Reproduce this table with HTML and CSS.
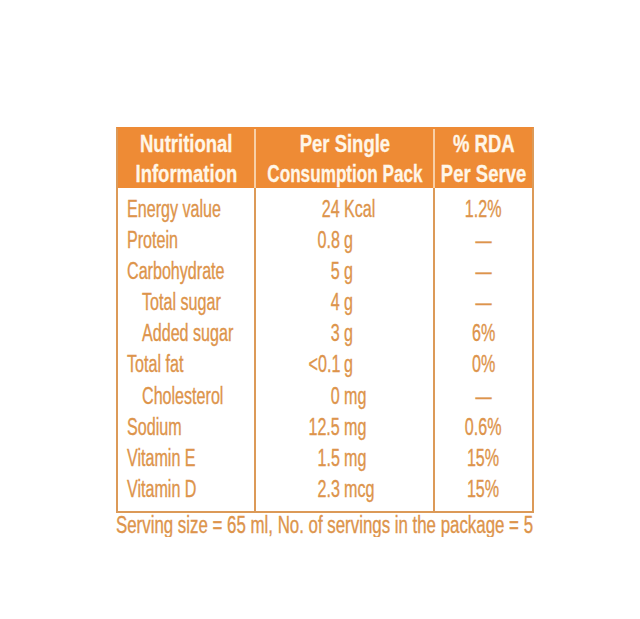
FILE: index.html
```html
<!DOCTYPE html>
<html lang="en">
<head>
<meta charset="utf-8">
<title>Nutritional Information</title>
<link rel="stylesheet" href="styles.css">
</head>
<body>
<div class="label">
  <div class="panel">
    <div class="head">
      <div class="hcell h1">
        <div class="hl"><span class="ht">Nutritional</span></div>
        <div class="hl"><span class="ht">Information</span></div>
      </div>
      <div class="hcell h2">
        <div class="hl"><span class="ht">Per Single</span></div>
        <div class="hl"><span class="ht tight">Consumption Pack</span></div>
      </div>
      <div class="hcell h3">
        <div class="hl"><span class="ht">% RDA</span></div>
        <div class="hl"><span class="ht">Per Serve</span></div>
      </div>
    </div>
    <div class="body">
      <div class="col names">
        <div class="row"><span class="t">Energy value</span></div>
        <div class="row"><span class="t">Protein</span></div>
        <div class="row"><span class="t">Carbohydrate</span></div>
        <div class="row sub"><span class="t">Total sugar</span></div>
        <div class="row sub"><span class="t">Added sugar</span></div>
        <div class="row"><span class="t">Total fat</span></div>
        <div class="row sub"><span class="t">Cholesterol</span></div>
        <div class="row"><span class="t">Sodium</span></div>
        <div class="row"><span class="t">Vitamin E</span></div>
        <div class="row"><span class="t">Vitamin D</span></div>
      </div>
      <div class="col values">
        <div class="row val"><span class="num"><span class="t">24</span></span><span class="unit"><span class="t">Kcal</span></span></div>
        <div class="row val"><span class="num"><span class="t">0.8</span></span><span class="unit"><span class="t">g</span></span></div>
        <div class="row val"><span class="num"><span class="t">5</span></span><span class="unit"><span class="t">g</span></span></div>
        <div class="row val"><span class="num"><span class="t">4</span></span><span class="unit"><span class="t">g</span></span></div>
        <div class="row val"><span class="num"><span class="t">3</span></span><span class="unit"><span class="t">g</span></span></div>
        <div class="row val"><span class="num"><span class="t">&lt;0.1</span></span><span class="unit"><span class="t">g</span></span></div>
        <div class="row val"><span class="num"><span class="t">0</span></span><span class="unit"><span class="t">mg</span></span></div>
        <div class="row val"><span class="num"><span class="t">12.5</span></span><span class="unit"><span class="t">mg</span></span></div>
        <div class="row val"><span class="num"><span class="t">1.5</span></span><span class="unit"><span class="t">mg</span></span></div>
        <div class="row val"><span class="num"><span class="t">2.3</span></span><span class="unit"><span class="t">mcg</span></span></div>
      </div>
      <div class="col rda">
        <div class="row"><span class="t">1.2%</span></div>
        <div class="row"><span class="t">—</span></div>
        <div class="row"><span class="t">—</span></div>
        <div class="row"><span class="t">—</span></div>
        <div class="row"><span class="t">6%</span></div>
        <div class="row"><span class="t">0%</span></div>
        <div class="row"><span class="t">—</span></div>
        <div class="row"><span class="t">0.6%</span></div>
        <div class="row"><span class="t">15%</span></div>
        <div class="row"><span class="t">15%</span></div>
      </div>
    </div>
  </div>
  <p class="foot"><span class="t">Serving size = 65 ml, No. of servings in the package = 5</span></p>
</div>
</body>
</html>
```
FILE: styles.css
```css
html, body {
  margin: 0;
  padding: 0;
  background: #ffffff;
}

body {
  font-family: "Liberation Sans", Arial, sans-serif;
  color: #dd944b;
}

.label {
  width: 418px;
  margin: 127px 0 0 116px;
}

.panel {
  border: 2px solid #dc9a58;
  border-top-color: #ec8a37;
}

.head {
  display: grid;
  grid-template-columns: 136px 179px 99px;
  background: #ee8b35;
  margin-top: -2px;
  padding-top: 2px;
  color: #fff6e8;
  font-weight: bold;
  font-size: 24.5px;
  line-height: 29.5px;
}

.hcell {
  height: 59px;
  overflow: hidden;
}

.h2, .h3 {
  border-left: 2px solid #f8cfa6;
}

.hl {
  display: flex;
  justify-content: center;
  white-space: nowrap;
}

.ht {
  display: inline-block;
  transform: scaleX(0.755);
  transform-origin: center;
  -webkit-text-stroke: 0.3px currentColor;
}

.ht.tight {
  transform: scaleX(0.70);
}

.body {
  display: grid;
  grid-template-columns: 136px 179px 99px;
  font-size: 23px;
  line-height: 31.1px;
}

.col {
  padding: 6px 0 6px;
  overflow: hidden;
}

.values, .rda {
  border-left: 2px solid #dc9a58;
}

.row {
  height: 31.1px;
  white-space: nowrap;
}

.t {
  display: inline-block;
  transform: scaleX(0.70);
  -webkit-text-stroke: 0.35px currentColor;
}

.names .row {
  padding-left: 9px;
}

.names .t {
  transform-origin: left;
}

.names .sub {
  padding-left: 24px;
}

.val {
  display: flex;
}

.num {
  width: 84px;
  text-align: right;
}

.num .t {
  transform-origin: right;
}

.unit {
  padding-left: 4px;
}

.unit .t {
  transform-origin: left;
}

.rda .row {
  display: flex;
  justify-content: center;
}

.rda .t {
  transform-origin: center;
}

.foot {
  margin: 0;
  font-size: 23px;
  line-height: 24px;
  white-space: nowrap;
  overflow: hidden;
}

.foot .t {
  transform: scaleX(0.733);
  transform-origin: left;
}
```
